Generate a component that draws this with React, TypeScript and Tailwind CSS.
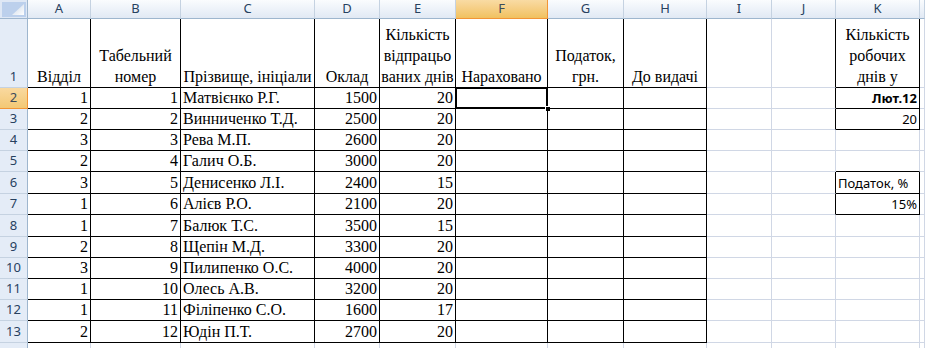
import React from 'react'

const cols = ['A', 'B', 'C', 'D', 'E', 'F', 'G', 'H', 'I', 'J', 'K', '']

const people: [number, number, string, number, number][] = [
  [1, 1, 'Матвієнко Р.Г.', 1500, 20],
  [2, 2, 'Винниченко Т.Д.', 2500, 20],
  [3, 3, 'Рева М.П.', 2600, 20],
  [2, 4, 'Галич О.Б.', 3000, 20],
  [3, 5, 'Денисенко Л.І.', 2400, 15],
  [1, 6, 'Алієв Р.О.', 2100, 20],
  [1, 7, 'Балюк Т.С.', 3500, 15],
  [2, 8, 'Щепін М.Д.', 3300, 20],
  [3, 9, 'Пилипенко О.С.', 4000, 20],
  [1, 10, 'Олесь А.В.', 3200, 20],
  [1, 11, 'Філіпенко С.О.', 1600, 17],
  [2, 12, 'Юдін П.Т.', 2700, 20],
]

const headings: React.ReactNode[] = [
  'Відділ',
  <>Табельний<br />номер</>,
  'Прізвище, ініціали',
  'Оклад',
  <>Кількість<br />відпрацьо<br />ваних днів</>,
  'Нараховано',
  <>Податок,<br />грн.</>,
  'До видачі',
]

// sheet rows 1..14 -> index 0..13
const boxed = (r: number, c: number) => {
  if (r < 0 || c < 0) return false
  if (r <= 12 && c <= 7) return true
  if (c === 10 && [0, 1, 2, 5, 6].includes(r)) return true
  return false
}

const serif = "font-['Liberation_Serif','Times_New_Roman',serif]"
const sans = "font-['Noto_Sans','Open_Sans',sans-serif]"

function content(r: number, c: number) {
  if (r === 0) {
    if (c <= 7)
      return (
        <div className={`flex h-full items-end justify-center text-center text-[16px] leading-[21px] ${serif}`}>
          <span>{headings[c]}</span>
        </div>
      )
    if (c === 10)
      return (
        <div className={`flex h-full items-end justify-center text-center text-[16px] leading-[21px] ${serif}`}>
          <span>Кількість<br />робочих<br />днів у</span>
        </div>
      )
    return null
  }
  const p = r >= 1 && r <= 12 ? people[r - 1] : null
  if (p && c <= 4) {
    const v = p[c]
    return (
      <div
        className={`flex h-full items-center px-[2px] text-[16px] leading-[20px] ${serif} ${
          c === 2 ? 'justify-start' : 'justify-end'
        }`}
      >
        {v}
      </div>
    )
  }
  if (c === 10) {
    const k: Record<number, [string, string]> = {
      1: ['Лют.12', 'justify-end font-bold'],
      2: ['20', 'justify-end'],
      5: ['Податок, %', 'justify-start'],
      6: ['15%', 'justify-end'],
    }
    const item = k[r]
    if (!item) return null
    return (
      <div className={`flex h-full items-end pb-[1px] px-[2px] text-[13px] leading-[18px] ${sans} ${item[1]}`}>
        {item[0]}
      </div>
    )
  }
  return null
}

function Cell({ r, c }: { r: number; c: number }) {
  const right = boxed(r, c) || boxed(r, c + 1)
  const bottom = boxed(r, c) || boxed(r + 1, c)
  const selected = r === 1 && c === 5
  return (
    <div
      className={`relative border-r border-b text-black ${right ? 'border-r-black' : 'border-r-[#d0d7e5]'} ${
        bottom ? 'border-b-black' : 'border-b-[#d0d7e5]'
      }`}
    >
      {content(r, c)}
      {selected && (
        <>
          <div className="absolute -left-[1px] -top-[1px] -right-[1px] -bottom-[1px] border-2 border-black" />
          <div className="absolute -right-[4px] -bottom-[4px] h-[6px] w-[6px] border border-white bg-black" />
        </>
      )}
    </div>
  )
}

export default function App() {
  const rowIdx = Array.from({ length: 14 }, (_, i) => i)
  return (
    <div className="h-[348px] w-[925px] overflow-hidden bg-white">
      <div className="grid grid-cols-[28px_63px_90px_134px_65px_76px_92px_76px_83px_65px_64px_84px_1fr] grid-rows-[19px_69px_21px_21px_21px_21px_22px_21px_22px_21px_21px_21px_21px_22px_20px]">
        {/* corner */}
        <div className="flex items-center justify-center border-r border-b border-[#9eb6ce] bg-[#dfe8f5]">
          <div className="flex h-[15px] w-[24px] items-end justify-end bg-[#bcd0ec] p-[2px]">
            <svg width="12" height="11" viewBox="0 0 12 11">
              <defs>
                <linearGradient id="tri" x1="0" y1="0" x2="1" y2="1">
                  <stop offset="0" stopColor="#c9d6e6" />
                  <stop offset="1" stopColor="#ffffff" />
                </linearGradient>
              </defs>
              <polygon points="12,0 12,11 0,11" fill="url(#tri)" />
            </svg>
          </div>
        </div>
        {cols.map((l, c) => (
          <div
            key={c}
            className={`flex items-center justify-center border-r border-b text-[13px] ${sans} ${
              c === 5
                ? 'border-[#f29536] bg-gradient-to-b from-[#f9dba3] to-[#f1c15f] text-[#3b4a5a]'
                : 'border-r-[#c5d2e1] border-b-[#9eb6ce] bg-gradient-to-b from-[#fafcfe] to-[#e1e9f4] text-[#27415f]'
            }`}
          >
            {l}
          </div>
        ))}
        {rowIdx.map((r) => (
          <React.Fragment key={r}>
            <div
              className={`flex items-center justify-center border-r border-b text-[13px] ${sans} ${
                r === 1
                  ? 'border-[#f29536] bg-gradient-to-b from-[#f9d99f] to-[#f3c874] text-[#3b4a5a]'
                  : 'border-r-[#9eb6ce] border-b-[#c5d2e1] bg-[#e4ecf7] text-[#27415f]'
              } ${r === 0 ? 'items-end pb-[1px]' : ''}`}
            >
              {r < 13 ? r + 1 : null}
            </div>
            {cols.map((_, c) => (
              <Cell key={c} r={r} c={c} />
            ))}
          </React.Fragment>
        ))}
      </div>
    </div>
  )
}
